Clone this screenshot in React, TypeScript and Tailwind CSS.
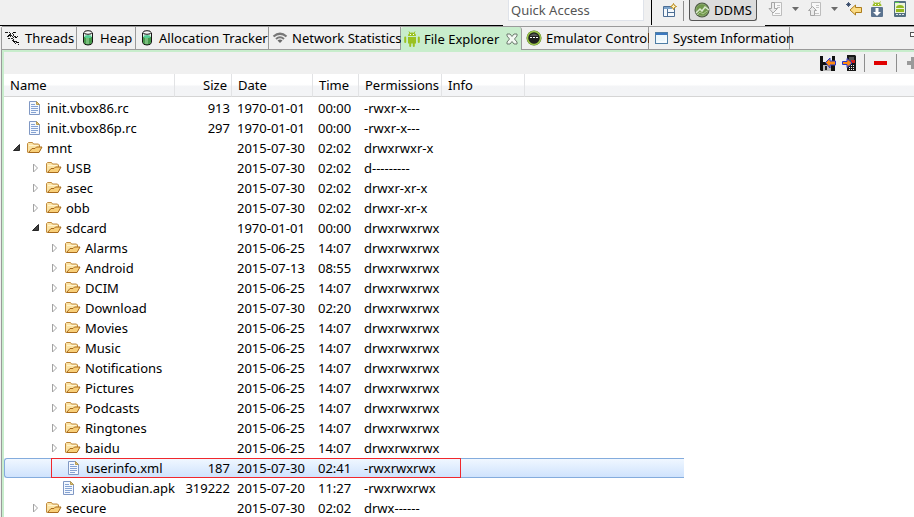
import type { ReactNode } from "react";

type Entry = {
  name: string;
  level: 0 | 1 | 2;
  kind: "file" | "folder";
  open?: boolean;
  size?: string;
  date: string;
  time: string;
  perm: string;
  selected?: boolean;
};

const folder = (name: string, level: 0 | 1 | 2, date: string, time: string, perm: string, open = false): Entry => ({
  name, level, kind: "folder", date, time, perm, open,
});

const ENTRIES: Entry[] = [
  { name: "init.vbox86.rc", level: 0, kind: "file", size: "913", date: "1970-01-01", time: "00:00", perm: "-rwxr-x---" },
  { name: "init.vbox86p.rc", level: 0, kind: "file", size: "297", date: "1970-01-01", time: "00:00", perm: "-rwxr-x---" },
  folder("mnt", 0, "2015-07-30", "02:02", "drwxrwxr-x", true),
  folder("USB", 1, "2015-07-30", "02:02", "d---------"),
  folder("asec", 1, "2015-07-30", "02:02", "drwxr-xr-x"),
  folder("obb", 1, "2015-07-30", "02:02", "drwxr-xr-x"),
  folder("sdcard", 1, "1970-01-01", "00:00", "drwxrwxrwx", true),
  folder("Alarms", 2, "2015-06-25", "14:07", "drwxrwxrwx"),
  folder("Android", 2, "2015-07-13", "08:55", "drwxrwxrwx"),
  folder("DCIM", 2, "2015-06-25", "14:07", "drwxrwxrwx"),
  folder("Download", 2, "2015-07-30", "02:20", "drwxrwxrwx"),
  folder("Movies", 2, "2015-06-25", "14:07", "drwxrwxrwx"),
  folder("Music", 2, "2015-06-25", "14:07", "drwxrwxrwx"),
  folder("Notifications", 2, "2015-06-25", "14:07", "drwxrwxrwx"),
  folder("Pictures", 2, "2015-06-25", "14:07", "drwxrwxrwx"),
  folder("Podcasts", 2, "2015-06-25", "14:07", "drwxrwxrwx"),
  folder("Ringtones", 2, "2015-06-25", "14:07", "drwxrwxrwx"),
  folder("baidu", 2, "2015-06-25", "14:07", "drwxrwxrwx"),
  { name: "userinfo.xml", level: 2, kind: "file", size: "187", date: "2015-07-30", time: "02:41", perm: "-rwxrwxrwx", selected: true },
  { name: "xiaobudian.apk", level: 2, kind: "file", size: "319222", date: "2015-07-20", time: "11:27", perm: "-rwxrwxrwx" },
  folder("secure", 1, "2015-07-30", "02:02", "drwx------"),
];

const INDENT = { 0: "pl-2", 1: "pl-[27px]", 2: "pl-[46px]" };

function Svg({ w = 16, h = 16, crisp = false, children }: { w?: number; h?: number; crisp?: boolean; children: ReactNode }) {
  return (
    <svg className="block shrink-0" width={w} height={h} viewBox={`0 0 ${w} ${h}`} fill="none" shapeRendering={crisp ? "crispEdges" : "auto"} aria-hidden="true">
      {children}
    </svg>
  );
}

function FolderIcon() {
  return (
    <Svg>
      <path d="M.5 12.5v-9l1-1h4l1 1.500h5l1 1v2.500h2.500l-3 5.500z" fill="#fbe3a4" />
      <path d="M.5 12.500v-9l1-1h4l1 1.500h5l1 1v2" stroke="#c08a3e" />
      <path d="M1.500 12.500l3.500-4h3l1.500-1.500h5.500l-3 5.500z" fill="#f8cf78" stroke="#a86a1c" />
      <path d="M2 5.500h9" stroke="#fff3cf" />
    </Svg>
  );
}

function FileIcon() {
  return (
    <Svg>
      <path d="M2.500 1.500h7l3 3v10h-10z" fill="#f4f8fe" stroke="#8098c4" />
      <path d="M9.500 1.500l3 3h-3z" fill="#e3c36f" stroke="#b49a55" />
      <path d="M4 4.500h4M4 6.500h7M4 8.500h7M4 10.500h7M4 12.500h5" stroke="#86a3d2" />
    </Svg>
  );
}

function Expander({ open, name }: { open?: boolean; name: string }) {
  return (
    <button type="button" aria-expanded={!!open} aria-label={name} className="block h-4 w-3 shrink-0">
      <Svg w={12}>
        {open ? (
          <path d="M7.500 4.500v6h-6z" fill="#404040" stroke="#262626" />
        ) : (
          <path d="M2.500 4v8l4-4z" fill="#fff" stroke="#a3a3a3" />
        )}
      </Svg>
    </button>
  );
}

function ThreadsIcon() {
  return (
    <Svg crisp>
      <path d="M1 2h3l1 1h3l1-1 2 1-1 1M2 6h2l1-2 2 2h4l2 1M3 9l2-1 3 1 1 2h3l2 2M5 5l2 3M9 4l-1 2 1 2 1 1M11 11l2 3h2M7 10l4 4M0 2l3 2" stroke="#222" strokeDasharray="2 1" />
      <path d="M3 5h2v1H3zM8 2h2v1H8zM10 7h2v1h-2zM8 11h2v1H8zM12 12h2v1h-2z" fill="#000" />
    </Svg>
  );
}

function HeapIcon() {
  return (
    <Svg w={10}>
      <path d="M1 3v10q1 2 4 2t4-2V3z" fill="#e8f2ec" />
      <path d="M1 7h8v6q-1 2-4 2t-4-2z" fill="#479a4c" />
      <path d="M3 7h3v7H3z" fill="#78bd7c" />
      <ellipse cx="5" cy="6.500" rx="3.500" ry="1.500" fill="#55cf96" />
      <path d="M.5 3v9.500q.5 2.500 4.500 2.500t4.500-2.500V3" stroke="#151515" />
      <ellipse cx="5" cy="2.500" rx="4" ry="1.800" fill="#fafafa" stroke="#151515" />
    </Svg>
  );
}

function WifiIcon() {
  return (
    <Svg>
      <path d="M1.500 6.500q6.500-5.500 13 0" stroke="#777" strokeWidth="2.200" />
      <path d="M4 9q4-3.500 8 0" stroke="#777" strokeWidth="2" />
      <path d="M5.500 10.500q2.500-2 5 0L8 13z" fill="#6a6a6a" />
    </Svg>
  );
}

function AndroidIcon() {
  return (
    <Svg>
      <path d="M4 5q0-3.500 4-3.500T12 5z" fill="#9bc222" />
      <path d="M5 .5l1 1.800M11 .5l-1 1.800" stroke="#9bc222" />
      <path d="M4 6h8v6.500H4z" fill="#9bc222" />
      <path d="M1.200 6.500v4.500M14.800 6.500v4.500" stroke="#9bc222" strokeWidth="2" strokeLinecap="round" />
      <path d="M6.200 12v3M9.800 12v3" stroke="#9bc222" strokeWidth="2" strokeLinecap="round" />
      <path d="M6 3h1v1H6zM9 3h1v1H9z" fill="#fff" />
    </Svg>
  );
}

function CloseIcon() {
  return (
    <Svg w={12} h={12}>
      <path d="M1 1h3l2 2.500L8 1h3v2L8.500 6 11 9v2H8L6 8.500 4 11H1V9l2.500-3L1 3z" fill="#f2f8f2" stroke="#6d7a6e" />
    </Svg>
  );
}

function EmulatorIcon() {
  return (
    <Svg>
      <circle cx="8" cy="8" r="7.500" fill="#3e6120" />
      <circle cx="8" cy="8" r="6.500" stroke="#9fc54d" strokeWidth="1.500" />
      <circle cx="8" cy="8" r="5.500" fill="#202020" />
      <path d="M3.500 6q4.500-5 9 0z" fill="#555" />
      <path d="M4 7h2v1H4zM7 7h2v1H7zM10 7h2v1h-2z" fill="#fff" />
    </Svg>
  );
}

function WindowIcon() {
  return (
    <Svg w={13} h={13}>
      <rect x=".5" y=".5" width="12" height="11" fill="#edf7fc" stroke="#4f7ea5" />
      <path d="M1 1h11v2H1z" fill="#3b78c0" />
      <path d="M2 10h9V5" stroke="#fff" />
    </Svg>
  );
}

function PerspectiveIcon() {
  return (
    <Svg>
      <path d="M1.500 3.500h11v10h-11z" fill="#f4f8fc" stroke="#4d6e94" />
      <path d="M2 4h8v2H2z" fill="#7ba3cb" />
      <path d="M5.500 6v7.500M5.500 9.500h7" stroke="#4d6e94" />
      <path d="M11.500.5l1 2 2 1-2 1-1 2-1-2-2-1 2-1z" fill="#fff4c0" stroke="#b98715" />
    </Svg>
  );
}

function DdmsIcon() {
  return (
    <Svg>
      <circle cx="8" cy="8" r="7.500" fill="#4d5a44" />
      <circle cx="8" cy="8" r="6" fill="#70984b" stroke="#8fae70" />
      <path d="M2 11l4-4 2 2 3-4 4 3" stroke="#dbe8cf" strokeWidth="1.500" />
      <path d="M3 13l3-3 3 2 4-3" stroke="#b0ca94" />
    </Svg>
  );
}

function PageArrowIcon({ up = false }: { up?: boolean }) {
  return (
    <Svg>
      <path d="M4.500 1.500h9v13h-9z" fill="#f8f8f8" stroke="#bdbdbd" />
      <path d="M9 4.500h3M9 6.500h3M7 12.500h5" stroke="#c5c5c5" />
      {up ? (
        <path d="M5.500 5.500l4 4H7.500v5h-4v-5h-2z" fill="#ececec" stroke="#a5a5a5" />
      ) : (
        <path d="M3.500 1.500h3v6h3l-4.500 4.500-4-4.500h2.500z" fill="#ececec" stroke="#a5a5a5" />
      )}
    </Svg>
  );
}

function Caret() {
  return (
    <Svg w={7} h={4}>
      <path d="M0 0h7L3.500 4z" fill="#6b6b6b" />
    </Svg>
  );
}

function BackIcon() {
  return (
    <Svg>
      <path d="M15.500 6.500v5H9.500v2.500L4 9l5.500-5v2.500z" fill="#fbdb83" stroke="#ad7d1d" />
      <path d="M2.500 1v5M0 3.500h5M1 2l3 3M4 2L1 5" stroke="#23395c" strokeWidth=".8" />
    </Svg>
  );
}

function SdkIcon() {
  return (
    <Svg>
      <path d="M3.500 5q0-3.500 4.500-3.500T12.500 5z" fill="#9fc02c" />
      <path d="M4.500.5l1 1.500M11.500.5l-1 1.500" stroke="#9fc02c" />
      <path d="M6 3h1v1H6zM9 3h1v1H9z" fill="#fff" />
      <rect x="2" y="6" width="12" height="10" rx="1" fill="#5b738f" />
      <path d="M6.500 7h3v4H12l-4 4-4-4h2.500z" fill="#fff" />
    </Svg>
  );
}

function AvdIcon() {
  return (
    <Svg>
      <rect x="2" y="0" width="12" height="16" rx="1" fill="#546f82" />
      <path d="M3 2h10v10H3z" fill="#edf4da" />
      <path d="M3 1h4v1H3z" fill="#59d34c" />
      <path d="M4 7q0-3 4-3t4 3zM4 8h8v3H4z" fill="#93b81e" />
      <path d="M4 13h2v1H4zM7 13h2v1H7zM10 13h2v1h-2z" fill="#dce4e9" />
    </Svg>
  );
}

function PullIcon() {
  return (
    <Svg>
      <path d="M0 1h15v15H1l-1-1z" fill="#111" />
      <path d="M3 1h9v6H3z" fill="#f0f0f0" />
      <path d="M3 10h8v6H3z" fill="#bcbcbc" />
      <path d="M5 11h2v4H5z" fill="#222" />
      <path d="M5.500 7.500L10 3v3h5.500v4H10v3z" fill="#ff8a12" stroke="#2838c8" />
    </Svg>
  );
}

function PushIcon() {
  return (
    <Svg>
      <path d="M5 0h8l1 1v15H5z" fill="#171717" />
      <path d="M7 2h5v6H7z" fill="#555" />
      <path d="M9 5h4v3H9z" fill="#cf1e1e" />
      <path d="M7 10h1v1H7zM9 10h1v1H9zM11 10h1v1h-1zM7 12h1v1H7zM9 12h1v1H9zM11 12h1v1h-1zM7 14h1v1H7zM9 14h1v1H9zM11 14h1v1h-1z" fill="#eee" />
      <path d="M.5 6.500H5v-3L10 8l-5 4.500V9.500H.5z" fill="#ff8a12" stroke="#2838c8" />
    </Svg>
  );
}

const TABS: { label: string; icon: ReactNode; box: string; active?: boolean }[] = [
  { label: "Threads", icon: <ThreadsIcon />, box: "w-[75px] pl-[3px] gap-1" },
  { label: "Heap", icon: <HeapIcon />, box: "w-[59px] pl-[6px] gap-[7px]" },
  { label: "Allocation Tracker", icon: <HeapIcon />, box: "w-[133px] pl-[6px] gap-[7px]" },
  { label: "Network Statistics", icon: <WifiIcon />, box: "w-[132px] pl-[3px] gap-1" },
  { label: "File Explorer", icon: <AndroidIcon />, box: "w-[121px] pl-[3px] gap-1", active: true },
  { label: "Emulator Control", icon: <EmulatorIcon />, box: "w-[127px] pl-1 gap-1" },
  { label: "System Information", icon: <WindowIcon />, box: "w-[141px] pl-[6px] gap-[5px]" },
];

function IconButton({ label, children }: { label: string; children: ReactNode }) {
  return (
    <button type="button" aria-label={label} className="flex shrink-0 items-center justify-center">
      {children}
    </button>
  );
}

function TopBar() {
  return (
    <header className="flex h-[26px] shrink-0 items-stretch">
      <div className="flex-1 border-b border-black" />
      <div className="w-[148px] shrink-0 pl-[5px]">
        <input
          type="text"
          aria-label="Quick Access"
          placeholder="Quick Access"
          className="block h-[21px] w-[136px] border border-t-0 border-[#dfe3ea] bg-white px-[2px] text-[13px] leading-5 placeholder:text-[#555] placeholder:opacity-100"
        />
      </div>
      <div className="flex h-[25px] w-[114px] shrink-0 items-start border-l border-black pl-[10px]">
        <div className="flex items-center gap-[5px]">
          <IconButton label="Open Perspective"><PerspectiveIcon /></IconButton>
          <span className="h-5 w-px bg-[#8d8d8d]" />
          <button type="button" className="flex h-[21px] w-[68px] items-center gap-1 rounded-b-[3px] border border-t-0 border-[#555] bg-[#dcdcdc] pl-1 text-[13px]">
            <DdmsIcon />
            DDMS
          </button>
        </div>
      </div>
      <div className="flex w-[149px] shrink-0 items-start border-b border-black pl-[3px]">
        <div className="flex h-[18px] items-center">
          <IconButton label="Next Annotation"><PageArrowIcon /></IconButton>
          <span className="px-2"><IconButton label="Next Annotation menu"><Caret /></IconButton></span>
          <IconButton label="Previous Annotation"><PageArrowIcon up /></IconButton>
          <span className="px-2"><IconButton label="Previous Annotation menu"><Caret /></IconButton></span>
          <span className="flex gap-[7px]">
            <IconButton label="Last Edit Location"><BackIcon /></IconButton>
            <IconButton label="Android SDK Manager"><SdkIcon /></IconButton>
            <IconButton label="Android Virtual Device Manager"><AvdIcon /></IconButton>
          </span>
        </div>
      </div>
    </header>
  );
}

function TabBar() {
  return (
    <nav className="flex h-6 shrink-0 border-t border-[#9a9a9a]" aria-label="Views">
      {TABS.map((t) => (
        <div
          key={t.label}
          className={`flex shrink-0 items-center border-r border-[#9a9a9a] ${t.box} ${
            t.active ? "rounded-t-[3px] bg-[#c8edcc]" : "border-b bg-[#f0f0f0]"
          }`}
        >
          {t.icon}
          <button type="button" className="whitespace-nowrap">{t.label}</button>
          {t.active && (
            <span className="pl-[3px]">
              <IconButton label="Close"><CloseIcon /></IconButton>
            </span>
          )}
        </div>
      ))}
      <div className="flex flex-1 justify-end overflow-hidden border-b border-[#9a9a9a] pt-[5px]">
        <span className="h-[5px] w-1 border border-r-0 border-[#555] bg-white" />
      </div>
    </nav>
  );
}

function ViewToolbar() {
  return (
    <div className="flex h-[22px] shrink-0 items-center justify-end overflow-hidden">
      <div className="flex gap-[6px]">
        <IconButton label="Pull a file from the device"><PullIcon /></IconButton>
        <IconButton label="Push a file onto the device"><PushIcon /></IconButton>
      </div>
      <span className="ml-[6px] h-[18px] w-px bg-[#8d8d8d]" />
      <button type="button" aria-label="Delete the selection" className="mx-[9px] h-4 w-[13px] py-[6px]">
        <span className="block h-1 bg-[#e00000]" />
      </button>
      <span className="h-[18px] w-px bg-[#8d8d8d]" />
      <button type="button" aria-label="New Folder" className="ml-[10px] w-[7px] overflow-hidden">
        <Svg w={12} h={12}>
          <path d="M0 4h4V0h4v4h4v4H8v4H4V8H0z" fill="#9a9a9a" />
        </Svg>
      </button>
    </div>
  );
}

const TH = "h-[23px] border-r border-b border-r-[#e2e3e5] border-b-[#d5d5d5] p-0 pl-[6px] text-left font-normal";

function FileTable() {
  return (
    <table className="w-full table-fixed border-separate border-spacing-0">
      <colgroup>
        <col className="w-[171px]" />
        <col className="w-[57px]" />
        <col className="w-[81px]" />
        <col className="w-[46px]" />
        <col className="w-[83px]" />
        <col className="w-[83px]" />
        <col className="w-[159px]" />
        <col />
      </colgroup>
      <thead className="bg-linear-to-b from-white from-45% to-[#f3f4f6] to-55%">
        <tr>
          <th className={TH}>Name</th>
          <th className="h-[23px] border-r border-b border-r-[#e2e3e5] border-b-[#d5d5d5] p-0 pr-1 text-right font-normal">Size</th>
          <th className={TH}>Date</th>
          <th className={TH}>Time</th>
          <th className={TH}>Permissions</th>
          <th className={TH}>Info</th>
          <td colSpan={2} className="border-b border-[#d5d5d5] p-0" />
        </tr>
      </thead>
      <tbody>
        <tr aria-hidden="true"><td colSpan={8} className="h-px p-0" /></tr>
        {ENTRIES.map((e) => {
          const cell = `h-5 p-0 whitespace-nowrap ${
            e.selected ? "border-y border-[#84acdd] bg-linear-to-b from-[#f0f7ff] to-[#cfe3fd]" : ""
          }`;
          return (
            <tr key={e.name} aria-selected={!!e.selected}>
              <td className={`${cell} relative ${e.selected ? "rounded-l-[3px] border-l" : ""}`}>
                <div className={`flex h-[18px] items-center ${INDENT[e.level]}`}>
                  {e.kind === "folder" ? <Expander open={e.open} name={e.name} /> : <span className="w-3" />}
                  <span className="flex items-center gap-1 pl-[3px]">
                    {e.kind === "folder" ? <FolderIcon /> : <FileIcon />}
                    {e.name}
                  </span>
                </div>
                {e.selected && (
                  <div className="pointer-events-none absolute -top-px left-[46px] z-10 h-5 w-[410px] border border-[#f0282d]" />
                )}
              </td>
              <td className={`${cell} pr-[2px] text-right`}>{e.size}</td>
              <td className={`${cell} pl-[5px]`}>{e.date}</td>
              <td className={`${cell} pl-[5px]`}>{e.time}</td>
              <td className={`${cell} pl-[5px]`}>{e.perm}</td>
              <td className={cell} />
              <td className={cell} />
              <td className="p-0" />
            </tr>
          );
        })}
      </tbody>
    </table>
  );
}

export default function App() {
  return (
    <div className="flex h-screen flex-col overflow-hidden bg-[#f0f0f0] font-['Noto_Sans','Open_Sans',sans-serif] text-[13px] leading-[18px] text-black">
      <TopBar />
      <main className="ml-px flex min-h-0 flex-1 flex-col rounded-tl-[3px] border-l border-[#9a9a9a]">
        <TabBar />
        <section className="flex min-h-0 flex-1 flex-col border-t-2 border-l-2 border-[#c8edcc]">
          <ViewToolbar />
          <div className="min-h-0 flex-1 overflow-hidden bg-white">
            <FileTable />
          </div>
        </section>
      </main>
    </div>
  );
}
